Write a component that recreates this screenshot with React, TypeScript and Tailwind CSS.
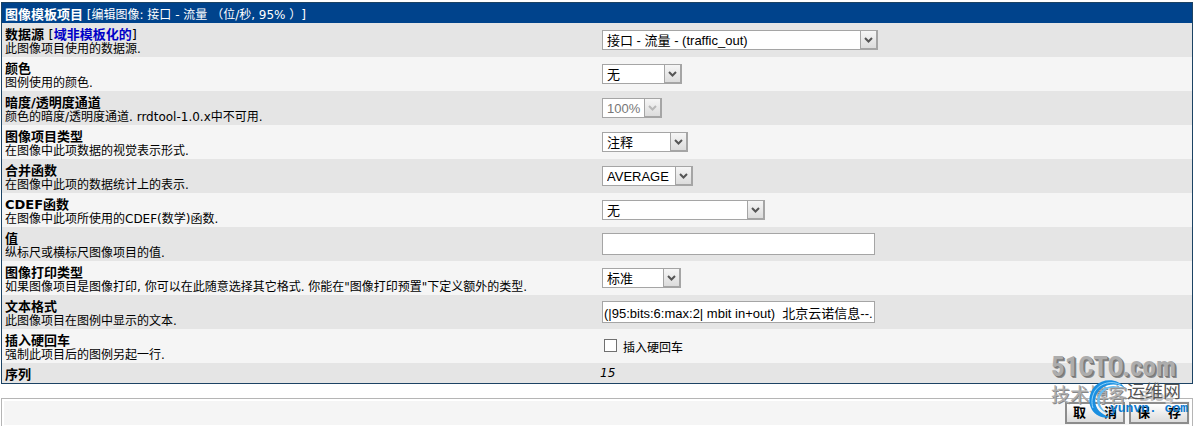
import type { ReactNode } from 'react';
import clsx from 'clsx';

type SelectProps = {
  id: string;
  width: string;
  value: string;
  disabled?: boolean;
};

function Select({ id, width, value, disabled }: SelectProps) {
  return (
    <div className={clsx('relative ml-0.5 h-5', width)}>
      <select
        id={id}
        disabled={disabled}
        defaultValue={value}
        className="block h-5 w-full appearance-none border border-[#a5a5a5] bg-white pt-px pl-1 text-[13px] leading-4 text-black disabled:text-[#777] disabled:opacity-100"
      >
        <option>{value}</option>
      </select>
      <span className="pointer-events-none absolute inset-y-0 right-0 flex w-[18px] items-center justify-center border border-r-2 border-b-2 border-[#a5a5a5] bg-linear-to-b from-[#f6f6f6] to-[#dcdcdc] pt-px">
        <svg
          width="9"
          height="6"
          viewBox="0 0 9 6"
          className={disabled ? 'text-[#b8b8b8]' : 'text-[#555]'}
        >
          <path d="M1 1L4.5 4.5L8 1" fill="none" stroke="currentColor" strokeWidth="2" />
        </svg>
      </span>
    </div>
  );
}

type TextInputProps = {
  id: string;
  value?: string;
};

function TextInput({ id, value = '' }: TextInputProps) {
  return (
    <input
      id={id}
      type="text"
      defaultValue={value}
      className="ml-0.5 h-[22px] w-[273px] border border-[#a5a5a5] bg-white px-px text-[13px] text-black"
    />
  );
}

type Field = {
  id?: string;
  title: string;
  link?: string;
  description?: string;
  control: ReactNode;
};

const fields: Field[] = [
  {
    id: 'task_item',
    title: '数据源',
    link: '域非模板化的',
    description: '此图像项目使用的数据源.',
    control: <Select id="task_item" width="w-[276px]" value="接口 - 流量 - (traffic_out)" />,
  },
  {
    id: 'color',
    title: '颜色',
    description: '图例使用的颜色.',
    control: <Select id="color" width="w-20" value="无" />,
  },
  {
    id: 'alpha',
    title: '暗度/透明度通道',
    description: '颜色的暗度/透明度通道. rrdtool-1.0.x中不可用.',
    control: <Select id="alpha" width="w-[60px]" value="100%" disabled />,
  },
  {
    id: 'item_type',
    title: '图像项目类型',
    description: '在图像中此项数据的视觉表示形式.',
    control: <Select id="item_type" width="w-[86px]" value="注释" />,
  },
  {
    id: 'consolidation',
    title: '合并函数',
    description: '在图像中此项的数据统计上的表示.',
    control: <Select id="consolidation" width="w-[91px]" value="AVERAGE" />,
  },
  {
    id: 'cdef',
    title: 'CDEF函数',
    description: '在图像中此项所使用的CDEF(数学)函数.',
    control: <Select id="cdef" width="w-[163px]" value="无" />,
  },
  {
    id: 'value',
    title: '值',
    description: '纵标尺或横标尺图像项目的值.',
    control: <TextInput id="value" />,
  },
  {
    id: 'gprint',
    title: '图像打印类型',
    description: '如果图像项目是图像打印, 你可以在此随意选择其它格式. 你能在"图像打印预置"下定义额外的类型.',
    control: <Select id="gprint" width="w-[79px]" value="标准" />,
  },
  {
    id: 'text_format',
    title: '文本格式',
    description: '此图像项目在图例中显示的文本.',
    control: <TextInput id="text_format" value="(|95:bits:6:max:2| mbit in+out)  北京云诺信息--." />,
  },
  {
    title: '插入硬回车',
    description: '强制此项目后的图例另起一行.',
    control: (
      <label className="ml-1 flex items-end gap-1.5 pt-0.5 text-xs">
        <input
          type="checkbox"
          className="mb-1 size-[13px] appearance-none border border-[#707070] bg-white checked:bg-[#00438c]"
        />
        插入硬回车
      </label>
    ),
  },
  {
    title: '序列',
    control: <em className="text-xs leading-[14px]">15</em>,
  },
];

function FieldRow({ field }: { field: Field }) {
  return (
    <div className="grid grid-cols-2 odd:bg-[#e5e5e5] even:bg-[#f5f5f5]">
      <div className="px-[3px] pt-[5px] pb-px leading-[14px] whitespace-nowrap">
        <div className="text-[13px] font-bold">
          {field.id ? <label htmlFor={field.id}>{field.title}</label> : field.title}
          {field.link && (
            <>
              {' '}
              <span className="font-normal">[</span>
              <a href="#" className="text-[#0000c8]">{field.link}</a>
              <span className="font-normal">]</span>
            </>
          )}
        </div>
        {field.description && <div className="text-xs leading-[14px]">{field.description}</div>}
      </div>
      <div className="flex items-center px-[3px]">{field.control}</div>
    </div>
  );
}

const buttonClass =
  'h-[22px] w-[60px] border-2 border-[#8c8c8c] bg-linear-to-b from-white to-[#dcdcdc] text-center text-[13px] leading-4 font-bold whitespace-pre text-black';

function Watermark() {
  return (
    <div className="pointer-events-none absolute right-[3px] bottom-1 h-[70px] w-[140px] leading-none whitespace-nowrap">
      <div
        className="absolute top-0.5 left-0 text-[27px] font-bold text-[#adadad] [text-shadow:1px_1px_0_#777,2px_2px_0_#8a8a8a]"
        style={{ fontFamily: '"Liberation Sans Narrow", "Roboto Condensed", "DejaVu Sans Condensed", sans-serif' }}
      >
        51CTO.com
      </div>
      <div className="absolute top-[34px] left-0 text-[19px] text-[#adadad] [text-shadow:1px_1px_0_#888]">
        技术博客
      </div>
      <div className="absolute top-[34px] left-[88px] text-sm font-bold text-[#c4c4c4]">Blog</div>
      <svg className="absolute top-[27px] left-[37px]" width="40" height="40" viewBox="0 0 40 40">
        <path
          d="M37 9C30-1 15-1 7 7C-2 17 0 32 11 37C15 39 19 39 22 38C11 35 5 27 8 17C12 6 26 2 37 9Z"
          fill="#1b8fe0"
        />
        <path d="M35 10C26 6 17 9 13 16C9 24 14 32 22 35C12 33 7 25 10 17C14 7 26 4 35 10Z" fill="#67bdf2" />
        <path d="M33 6C24 1 12 4 7 12C4 17 3 23 5 29" fill="none" stroke="#8fd3fa" strokeWidth="1" />
      </svg>
      <div className="absolute top-[31px] left-[76px] text-lg leading-none text-[#555]">运维网</div>
      <div className="absolute top-[50px] left-[59px] font-['Liberation_Mono',monospace] text-[13px] leading-none font-bold text-[#0b79d0]">
        yunvn. com
      </div>
    </div>
  );
}

export default function App() {
  return (
    <form
      className="relative bg-white px-px pt-0.5 text-black [text-spacing-trim:space-all] [&_input]:font-['Liberation_Sans','Noto_Sans_CJK_SC',sans-serif] [&_select]:font-['Liberation_Sans','Noto_Sans_CJK_SC',sans-serif]"
      style={{ fontFamily: '"DejaVu Sans", "Noto Sans CJK SC", sans-serif' }}
      onSubmit={(e) => e.preventDefault()}
    >
      <section className="border border-[#1c4364]">
        <h1 className="bg-[#00438c] px-[3px] pt-[5px] pb-px text-xs leading-[14px] whitespace-nowrap text-white">
          <strong className="text-[13px]">图像模板项目</strong> [编辑图像: 接口 - 流量 （位/秒, 95% ）]
        </h1>
        <div>
          {fields.map((field) => (
            <FieldRow key={field.title} field={field} />
          ))}
        </div>
      </section>

      {/* Save bar */}
      <div className="mt-3.5 border border-b-0 border-[#b5b5b5] px-0.5 pt-0.5 pb-px">
        <div className="flex justify-end gap-1 bg-[#f5f5f5] px-px py-px">
          <button type="button" className={buttonClass}>{'取    消'}</button>
          <button type="submit" className={buttonClass}>{'保    存'}</button>
        </div>
      </div>

      <Watermark />
    </form>
  );
}
